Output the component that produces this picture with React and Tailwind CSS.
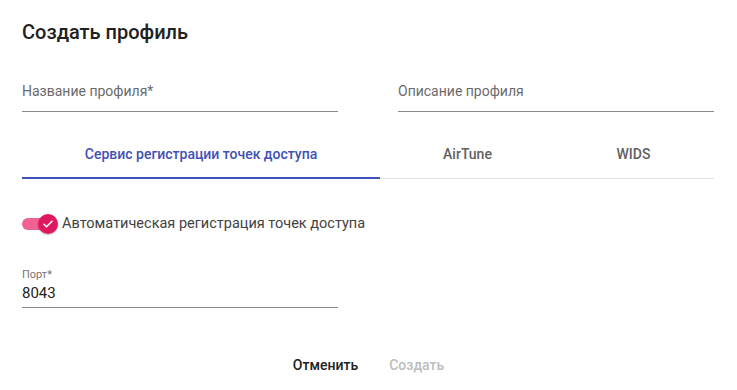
import { useState } from 'react';

const Field = ({ label }) => (
    <div className="border-b border-[#8a8a8a] pb-[10px]">
        <div className="text-[14px] leading-[20px] text-[#6b6b6b]">{label}</div>
    </div>
);

const tabs = [
    { name: 'Сервис регистрации точек доступа', width: 'w-[358px]' },
    { name: 'AirTune', width: 'w-[167px] pl-[8px]' },
    { name: 'WIDS', width: 'w-[167px] pl-[6px]' },
];

const App = () => {
    const [active, setActive] = useState(0);
    const [autoReg, setAutoReg] = useState(true);

    return (
        <div className="w-[737px] h-[390px] bg-white px-[22px] font-['Roboto',sans-serif]">
            <h1 className="pt-[20px] text-[20px] leading-[24px] font-medium text-[#212121]">Создать профиль</h1>

            <div className="grid grid-cols-2 gap-[60px] mt-[37px] w-[692px]">
                <Field label="Название профиля*" />
                <Field label="Описание профиля" />
            </div>

            <div className="mt-[18px] flex border-b border-[#e0e0e0] w-[692px]">
                {tabs.map((tab, i) => (
                    <button
                        key={tab.name}
                        onClick={() => setActive(i)}
                        className={`relative h-[48px] ${tab.width} text-[14px] font-medium ${active === i ? 'text-[#3f51b5]' : 'text-[#616161]'}`}
                    >
                        {tab.name}
                        {active === i && <span className="absolute left-0 right-0 -bottom-[1px] h-[2px] bg-[#3f51b5]" />}
                    </button>
                ))}
            </div>

            <label className="mt-[33px] flex items-center h-[24px] cursor-pointer" onClick={() => setAutoReg(!autoReg)}>
                <span className="relative w-[40px] h-[24px] flex items-center">
                    <span className={`w-[34px] h-[12px] rounded-full ${autoReg ? 'bg-[#f06292]' : 'bg-[#bdbdbd]'}`} />
                    <span className={`absolute top-[2px] ${autoReg ? 'left-[16px] bg-[#e0185f]' : 'left-0 bg-[#fafafa]'} w-[20px] h-[20px] rounded-full flex items-center justify-center shadow-[0_1px_2px_rgba(0,0,0,0.25)]`}>
                        {autoReg && (
                            <svg width="12" height="12" viewBox="0 0 24 24" fill="none" stroke="white" strokeWidth="3.2" strokeLinecap="round" strokeLinejoin="round">
                                <path d="M4 12.5l5 5L20 6.5" />
                            </svg>
                        )}
                    </span>
                </span>
                <span className="text-[14.5px] leading-[20px] text-[#424242]">Автоматическая регистрация точек доступа</span>
            </label>

            <div className="mt-[32px] w-[316px] border-b border-[#8a8a8a] pb-[4px]">
                <div className="text-[11px] leading-[14px] text-[#757575]">Порт*</div>
                <div className="text-[15px] leading-[20px] text-[#212121] mt-[1px]">8043</div>
            </div>

            <div className="mt-[47px] flex justify-center gap-[31px] text-[14px] font-medium">
                <button className="text-[#212121]">Отменить</button>
                <button className="text-[#bdbdbd]" disabled>Создать</button>
            </div>
        </div>
    );
};

export default App;
